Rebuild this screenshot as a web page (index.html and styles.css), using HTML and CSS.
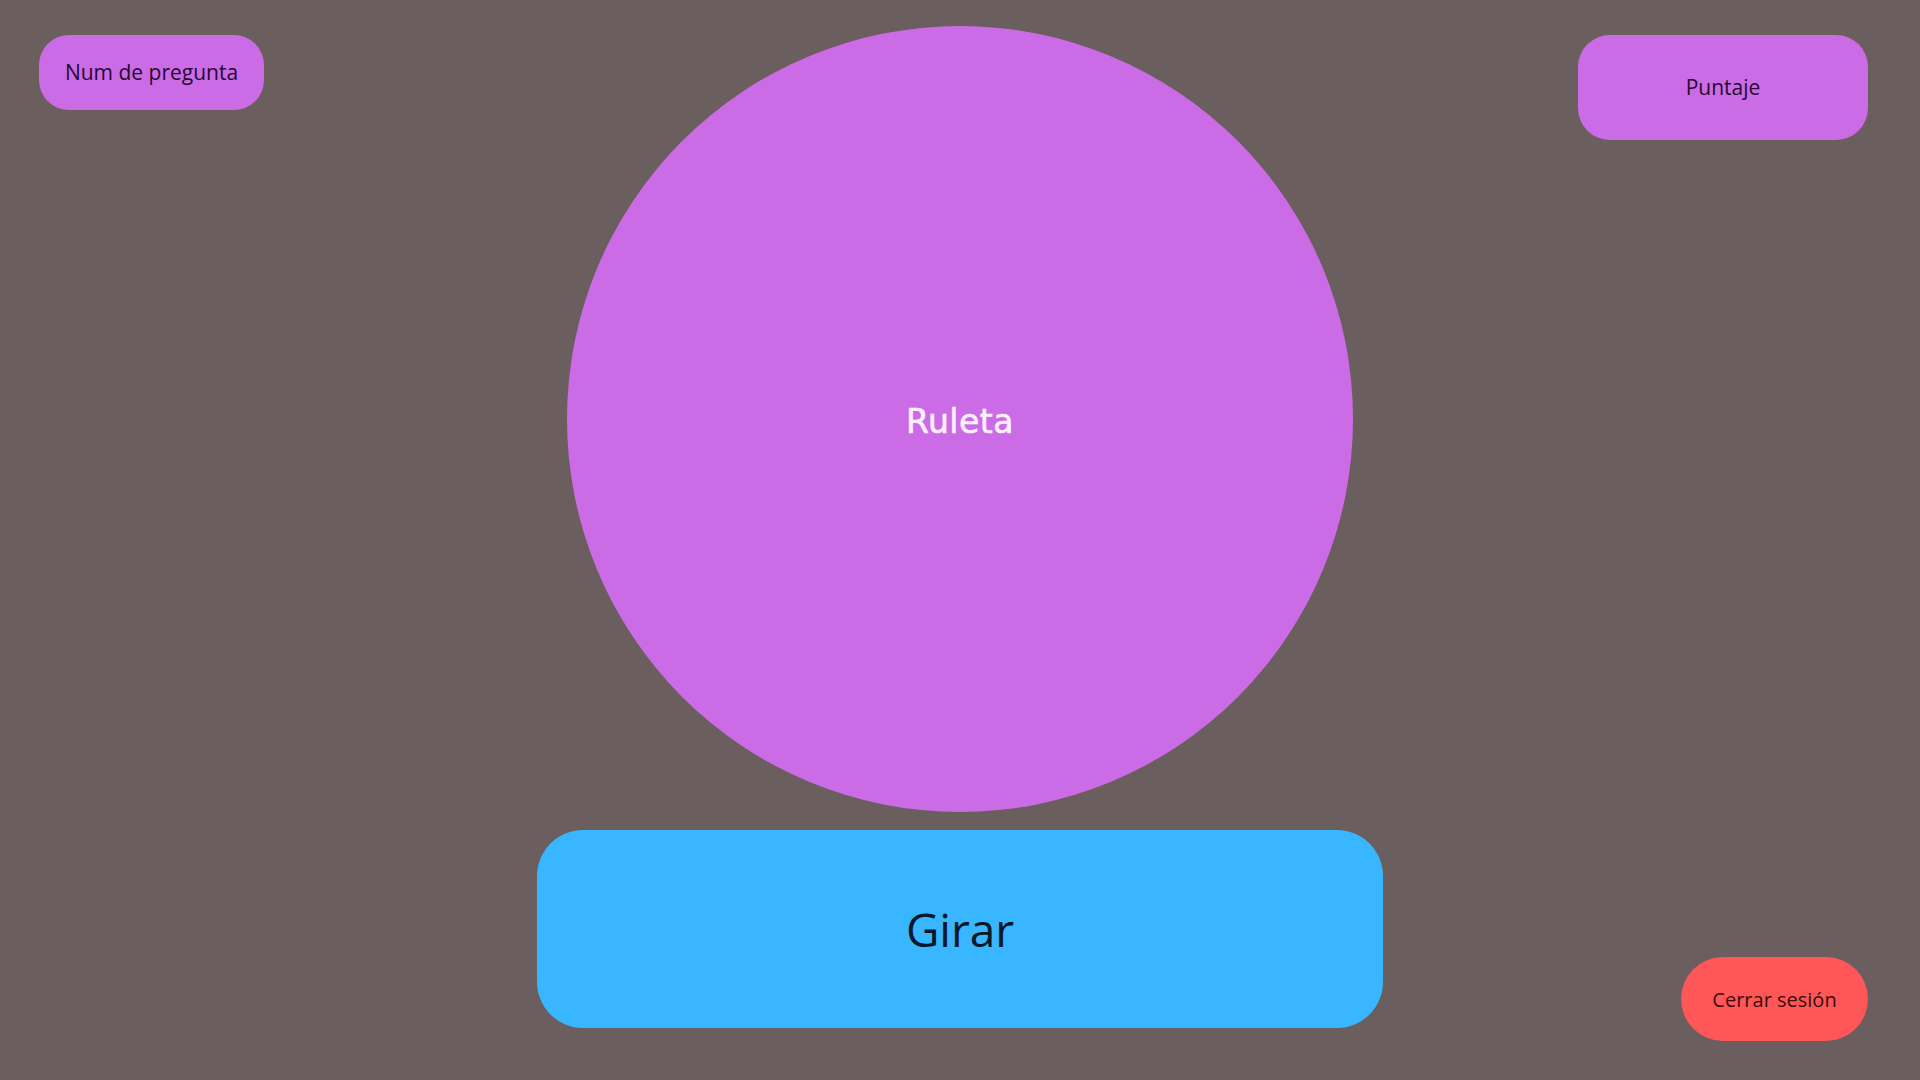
FILE: index.html
```html
<!DOCTYPE html>
<html lang="es">
<head>
<meta charset="utf-8">
<title>Ruleta</title>
<link rel="stylesheet" href="styles.css">
</head>
<body>
<main class="screen">
  <section class="col-left">
    <div class="pill pill-question">Num de pregunta</div>
  </section>
  <section class="col-center">
    <div class="wheel"><span class="wheel-label">Ruleta</span></div>
    <button class="spin">Girar</button>
  </section>
  <section class="col-right">
    <div class="pill pill-score">Puntaje</div>
    <button class="pill logout">Cerrar sesión</button>
  </section>
</main>
</body>
</html>
```

FILE: styles.css
```css
* { box-sizing: border-box; }
html, body { margin: 0; padding: 0; }
body {
  background: #6b5e5e;
  font-family: "Open Sans", "Liberation Sans", sans-serif;
  width: 1920px;
  height: 1080px;
  overflow: hidden;
}
.screen {
  display: grid;
  grid-template-columns: 1fr 846px 1fr;
  height: 1080px;
}
.col-left {
  padding: 35px 0 0 39px;
}
.col-center {
  display: flex;
  flex-direction: column;
  align-items: center;
  padding-top: 26px;
  gap: 18px;
}
.col-right {
  display: flex;
  flex-direction: column;
  align-items: flex-end;
  justify-content: space-between;
  padding: 35px 52px 39px 0;
}
.pill {
  display: flex;
  align-items: center;
  justify-content: center;
  font-family: "Open Sans", "Liberation Sans", sans-serif;
  font-size: 20px;
  border: none;
}
.pill-question {
  width: 225px;
  height: 75px;
  border-radius: 30px;
  background: #cb6ce6;
  color: #250830;
  font-size: 21px;
  padding-bottom: 2px;
}
.pill-score {
  width: 290px;
  height: 105px;
  border-radius: 32px;
  background: #cb6ce6;
  color: #250830;
  font-size: 21px;
  padding-bottom: 2px;
}
.logout {
  width: 187px;
  height: 84px;
  border-radius: 42px;
  background: #ff5757;
  color: #3a0c0c;
  padding: 0;
}
.wheel {
  width: 786px;
  height: 786px;
  border-radius: 50%;
  background: #cb6ce6;
  display: flex;
  align-items: center;
  justify-content: center;
}
.wheel-label {
  font-family: "Comic Sans MS", "DejaVu Sans", sans-serif;
  font-size: 33px;
  color: #fdf0fd;
  letter-spacing: 0.5px;
  padding-top: 5px;
  -webkit-text-stroke: 0.6px #fdf0fd;
}
.spin {
  width: 846px;
  height: 198px;
  border: none;
  border-radius: 46px;
  background: #38b6ff;
  color: #081826;
  font-family: "Open Sans", "Liberation Sans", sans-serif;
  font-size: 46px;
  padding: 0;
}
```
